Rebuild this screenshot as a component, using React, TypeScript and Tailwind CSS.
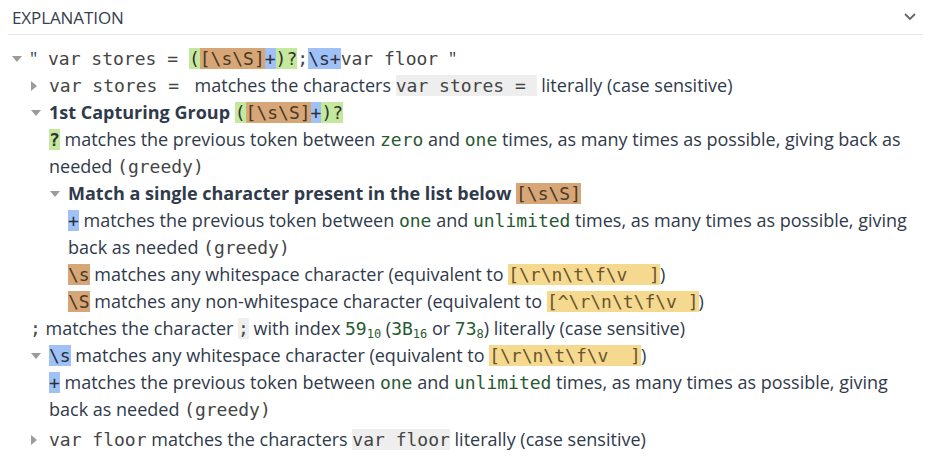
import type { ReactNode } from "react";

// regex101-style explanation tree

const mono = "[font-family:'DejaVu_Sans_Mono',monospace] text-[18px] whitespace-pre";
const code = "[font-family:'DejaVu_Sans_Mono',monospace] text-[18px] whitespace-pre text-[#454545]";
const word = "[font-family:'DejaVu_Sans_Mono',monospace] text-[18px] text-[#285a30]";

function Caret({ open }: { open: boolean }) {
  return (
    <div className="w-[19px] h-[27px] shrink-0 flex items-center">
      {open ? (
        <svg width="10" height="6" viewBox="0 0 10 6" className="ml-[1px]">
          <path d="M0 0 L10 0 L5 6 Z" fill="#9b9b9b" />
        </svg>
      ) : (
        <svg width="6" height="10" viewBox="0 0 6 10" className="ml-[1px]">
          <path d="M0 0 L6 5 L0 10 Z" fill="#9b9b9b" />
        </svg>
      )}
    </div>
  );
}

function Node({
  open,
  label,
  children,
  className = "",
}: {
  open: boolean;
  label: ReactNode;
  children?: ReactNode;
  className?: string;
}) {
  return (
    <div className={"flex " + className}>
      <Caret open={open} />
      <div className="flex-1 min-w-0">
        <div>{label}</div>
        {children}
      </div>
    </div>
  );
}

function Leaf({ children }: { children: ReactNode }) {
  return <div>{children}</div>;
}

const Green = ({ children }: { children: ReactNode }) => (
  <span className={mono + " bg-[#c4e89c] text-[#333]"}>{children}</span>
);
const Tan = ({ children }: { children: ReactNode }) => (
  <span className={mono + " bg-[#d6a676] text-[#4a3826]"}>{children}</span>
);
const Blue = ({ children }: { children: ReactNode }) => (
  <span className={mono + " bg-[#9fc1f6] text-[#2a2f3a]"}>{children}</span>
);
const Yellow = ({ children }: { children: ReactNode }) => (
  <span className={mono + " bg-[#f4d98f] text-[#6a5430]"}>{children}</span>
);
const Lit = ({ children }: { children: ReactNode }) => (
  <span className={code + " bg-[#eeeeee]"}>{children}</span>
);

const Sub = ({ children }: { children: ReactNode }) => (
  <sub className="[font-family:'DejaVu_Sans_Mono',monospace] text-[12px] text-[#285a30]">{children}</sub>
);

function Group() {
  return (
    <Green>
      (<Tan>[\s\S]</Tan>
      <Blue>+</Blue>)?
    </Green>
  );
}

export default function App() {
  return (
    <div className="w-[931px] h-[470px] bg-white px-2 [font-family:'Open_Sans',sans-serif] text-[18px] leading-[27px] text-[#2f3a4b] overflow-hidden">
      <div className="flex items-center justify-between h-[35px] border-b border-[#e6e6e6] pl-1 pr-[7px]">
        <span className="text-[17px] text-[#34414f] tracking-[-0.1px]">EXPLANATION</span>
        <svg width="12" height="8" viewBox="0 0 12 8">
          <path d="M1 1 L6 6 L11 1" fill="none" stroke="#666" strokeWidth="1.8" />
        </svg>
      </div>

      <div className="pt-[10px] pl-[3px] pr-[8px]">
        <Node
          open
          label={
            <>
              "<span className={code}> var stores = </span>
              <Group />
              <span className={code}>;</span>
              <Blue>\s+</Blue>
              <span className={code}>var floor </span>"
            </>
          }
        >
          <Node
            open={false}
            label={
              <>
                <span className={code}>var stores = </span> matches the characters{" "}
                <Lit>var stores = </Lit> literally (case sensitive)
              </>
            }
          />
          <Node
            open
            label={
              <>
                <span className="font-bold">1st Capturing Group</span> <Group />
              </>
            }
          >
            <Leaf>
              <Green>
                <span className="font-bold">?</span>
              </Green>{" "}
              matches the previous token between <span className={word}>zero</span> and{" "}
              <span className={word}>one</span> times, as many times as possible, giving back as
              needed <span className={code}>(greedy)</span>
            </Leaf>
            <Node
              open
              label={
                <>
                  <span className="font-bold">Match a single character present in the list below</span>{" "}
                  <Tan>[\s\S]</Tan>
                </>
              }
            >
              <Leaf>
                <Blue>+</Blue> matches the previous token between <span className={word}>one</span> and{" "}
                <span className={word}>unlimited</span> times, as many times as possible, giving back as
                needed <span className={code}>(greedy)</span>
              </Leaf>
              <Leaf>
                <Tan>\s</Tan> matches any whitespace character (equivalent to{" "}
                <Yellow>{"[\\r\\n\\t\\f\\v  ]"}</Yellow>)
              </Leaf>
              <Leaf>
                <Tan>\S</Tan> matches any non-whitespace character (equivalent to{" "}
                <Yellow>{"[^\\r\\n\\t\\f\\v ]"}</Yellow>)
              </Leaf>
            </Node>
          </Node>
          <Leaf>
            <span className={code}>;</span> matches the character <Lit>;</Lit> with index{" "}
            <span className={word}>59</span>
            <Sub>10</Sub> (<span className={word}>3B</span>
            <Sub>16</Sub> or <span className={word}>73</span>
            <Sub>8</Sub>) literally (case sensitive)
          </Leaf>
          <Node
            open
            label={
              <>
                <Blue>\s</Blue> matches any whitespace character (equivalent to{" "}
                <Yellow>{"[\\r\\n\\t\\f\\v  ]"}</Yellow>)
              </>
            }
          >
            <Leaf>
              <Blue>+</Blue> matches the previous token between <span className={word}>one</span> and{" "}
              <span className={word}>unlimited</span> times, as many times as possible, giving back as
              needed <span className={code}>(greedy)</span>
            </Leaf>
          </Node>
          <Node
            open={false}
            className="mt-[3px]"
            label={
              <>
                <span className={code}>var floor</span> matches the characters <Lit>var floor</Lit>{" "}
                literally (case sensitive)
              </>
            }
          />
        </Node>
      </div>
    </div>
  );
}
